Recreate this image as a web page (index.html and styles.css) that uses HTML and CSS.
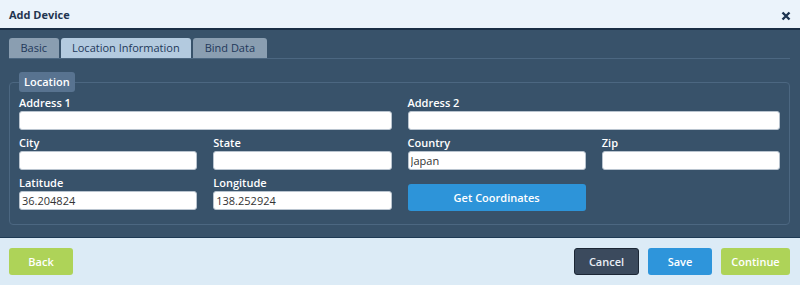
FILE: index.html
```html
<!DOCTYPE html>
<html>

<head>
    <title>Add Device</title>
    <link rel="stylesheet" href="styles.css">
</head>

<body>
    <div class="dialog">
        <div class="header">
            <h1>Add Device</h1>
            <span class="close">
                <svg width="10" height="10" viewBox="0 0 10 10">
                    <path d="M1.5 1.5 L8.5 8.5 M8.5 1.5 L1.5 8.5" stroke="#1c3350" stroke-width="2.4" fill="none" />
                </svg>
            </span>
        </div>

        <div class="content">
            <div class="tabs">
                <div class="tab">Basic</div>
                <div class="tab active">Location Information</div>
                <div class="tab">Bind Data</div>
            </div>

            <fieldset class="location">
                <legend>Location</legend>
                <div class="form-grid">
                    <div class="field span-2">
                        <label>Address 1</label>
                        <input type="text">
                    </div>
                    <div class="field span-2">
                        <label>Address 2</label>
                        <input type="text">
                    </div>

                    <div class="field">
                        <label>City</label>
                        <input type="text">
                    </div>
                    <div class="field">
                        <label>State</label>
                        <input type="text">
                    </div>
                    <div class="field">
                        <label>Country</label>
                        <input type="text" value="Japan">
                    </div>
                    <div class="field">
                        <label>Zip</label>
                        <input type="text">
                    </div>

                    <div class="field">
                        <label>Latitude</label>
                        <input type="text" value="36.204824">
                    </div>
                    <div class="field">
                        <label>Longitude</label>
                        <input type="text" value="138.252924">
                    </div>
                    <button class="coords-button">Get Coordinates</button>
                </div>
            </fieldset>
        </div>

        <div class="footer">
            <button class="btn btn-green">Back</button>
            <div class="footer-right">
                <button class="btn btn-dark">Cancel</button>
                <button class="btn btn-blue">Save</button>
                <button class="btn btn-green btn-wide">Continue</button>
            </div>
        </div>
    </div>
</body>

</html>
```

FILE: styles.css
```css
/* Add Device dialog */
body {
    margin: 0;
    padding: 0;
    font-family: "Open Sans", Arial, sans-serif;
    background-color: #dcebf6;
}

.dialog {
    width: 800px;
    height: 285px;
    display: flex;
    flex-direction: column;
}

.header {
    display: flex;
    justify-content: space-between;
    align-items: center;
    height: 28px;
    padding: 0 9px 0 9px;
    background-color: #ebf3fb;
    border-bottom: 2px solid #1a2e45;
}

.header h1 {
    margin: 0;
    font-size: 11px;
    font-weight: 700;
    color: #1f3550;
}

.close {
    display: flex;
    margin-top: 4px;
}

.content {
    box-sizing: border-box;
    height: 207px;
    padding: 8px 10px 0 9px;
    background-color: #38526a;
}

.tabs {
    display: flex;
    gap: 2px;
    height: 20px;
    border-bottom: 1px solid #4c6781;
}

.tab {
    padding: 0 11.5px;
    font-size: 11px;
    line-height: 20px;
    color: #22385a;
    background-color: #8a9eb1;
    border-radius: 3px 3px 0 0;
}

.tab.active {
    background-color: #b3cadf;
}

.location {
    margin: 13px 0 0 0;
    padding: 3px 9px 14px 9px;
    border: 1px solid #4c6781;
    border-radius: 4px;
}

.location legend {
    margin-left: 0;
    padding: 0 5px;
    height: 20px;
    line-height: 20px;
    font-size: 11px;
    font-weight: 600;
    color: #ffffff;
    background-color: #587390;
    border-radius: 3px;
}

.form-grid {
    display: grid;
    grid-template-columns: repeat(4, 1fr);
    column-gap: 16px;
    row-gap: 5px;
}

.span-2 {
    grid-column: span 2;
}

.field label {
    display: block;
    font-size: 11px;
    font-weight: 600;
    line-height: 16px;
    color: #ffffff;
}

.field input {
    display: block;
    width: 100%;
    height: 19px;
    box-sizing: border-box;
    margin: 0;
    padding: 0 2px;
    border: 1px solid #b9c4cf;
    border-radius: 3px;
    font-family: "Open Sans", Arial, sans-serif;
    font-size: 11px;
    color: #333333;
    background-color: #ffffff;
}

.coords-button {
    align-self: end;
    height: 27px;
    margin-bottom: -1px;
    border: none;
    border-radius: 3px;
    background-color: #2d94d9;
    color: #ffffff;
    font-family: "Open Sans", Arial, sans-serif;
    font-size: 11px;
    font-weight: 600;
}

.footer {
    flex: 1;
    display: flex;
    justify-content: space-between;
    align-items: center;
    padding: 0 10px 0 9px;
    background-color: #dcebf6;
    border-top: 1px solid #1e3a54;
}

.footer-right {
    display: flex;
    gap: 9px;
}

.btn {
    height: 27px;
    width: 64px;
    border: none;
    border-radius: 3px;
    font-family: "Open Sans", Arial, sans-serif;
    font-size: 11px;
    font-weight: 600;
    color: #ffffff;
}

.btn-wide {
    width: 69px;
}

.btn-green {
    background-color: #aed358;
}

.btn-blue {
    background-color: #2e95db;
}

.btn-dark {
    width: 65px;
    background-color: #3b4a5d;
    border: 1px solid #1c2735;
    color: #e9eef4;
}
```
